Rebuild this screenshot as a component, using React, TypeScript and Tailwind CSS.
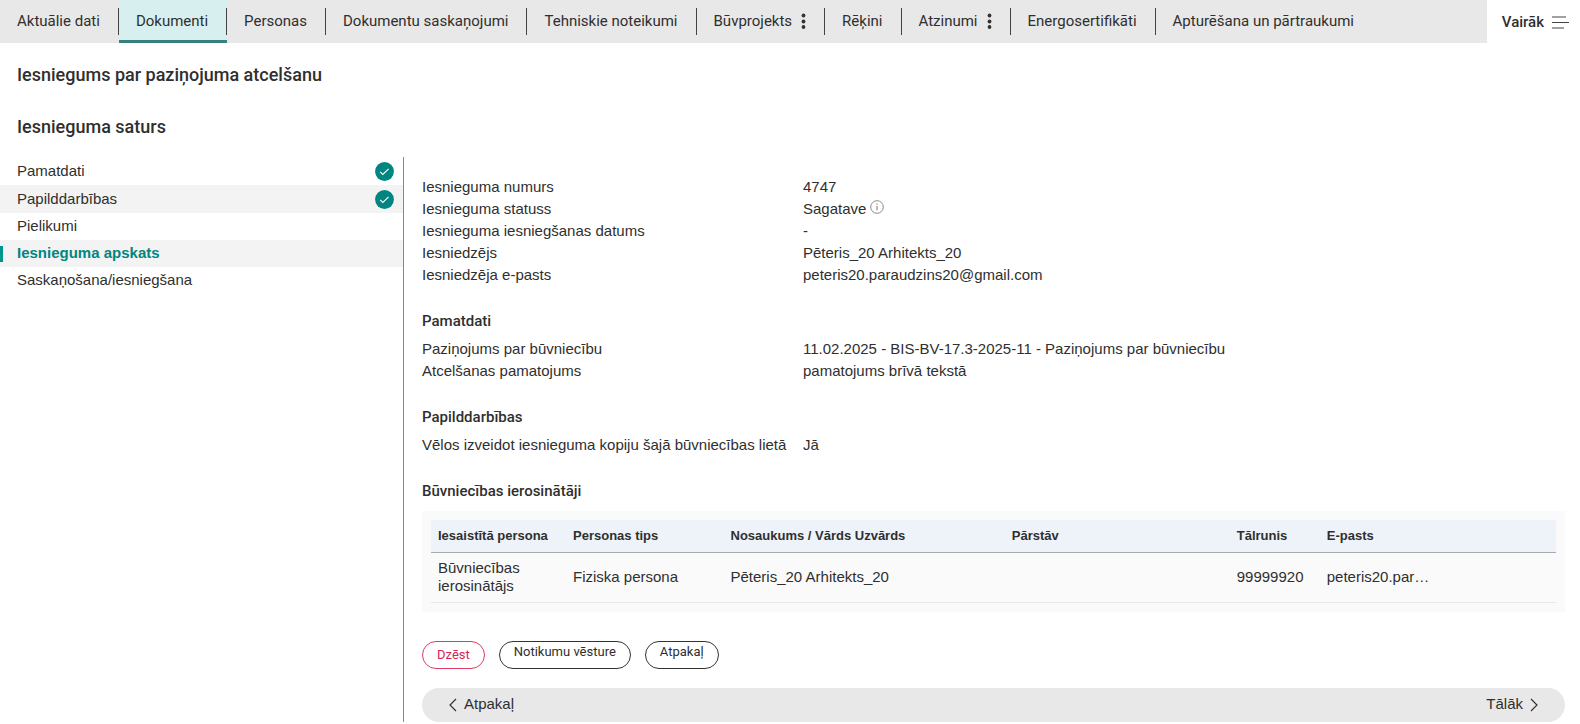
import { Fragment } from "react";

type Tab = { label: string; active?: boolean; menu?: boolean };

const tabs: Tab[] = [
  { label: "Aktuālie dati" },
  { label: "Dokumenti", active: true },
  { label: "Personas" },
  { label: "Dokumentu saskaņojumi" },
  { label: "Tehniskie noteikumi" },
  { label: "Būvprojekts", menu: true },
  { label: "Rēķini" },
  { label: "Atzinumi", menu: true },
  { label: "Energosertifikāti" },
  { label: "Apturēšana un pārtraukumi" },
];

const steps = [
  { label: "Pamatdati", done: true },
  { label: "Papilddarbības", done: true },
  { label: "Pielikumi" },
  { label: "Iesnieguma apskats", current: true },
  { label: "Saskaņošana/iesniegšana" },
];

function Dots() {
  return (
    <svg width="5" height="16" viewBox="0 0 5 16" fill="#333" aria-hidden="true">
      <circle cx="2.5" cy="2.5" r="1.9" />
      <circle cx="2.5" cy="8.5" r="1.9" />
      <circle cx="2.5" cy="14" r="1.9" />
    </svg>
  );
}

function InfoIcon() {
  return (
    <svg width="14" height="14" viewBox="0 0 14 14" fill="none" stroke="#8a8a8a" aria-hidden="true">
      <circle cx="7" cy="7" r="6.3" strokeWidth="1" />
      <path d="M7 6v4.2M7 3.6v1.2" strokeWidth="1.2" />
    </svg>
  );
}

function CheckIcon() {
  return (
    <svg width="19" height="19" viewBox="0 0 19 19" aria-hidden="true">
      <circle cx="9.5" cy="9.5" r="9.4" fill="#008580" />
      <path d="M5.2 9.9l2.6 2.6 5.8-5.6" fill="none" stroke="#fff" strokeWidth="1.1" />
    </svg>
  );
}

function Chevron({ d }: { d: string }) {
  return (
    <svg width="8" height="14" viewBox="0 0 8 14" fill="none" stroke="#333" strokeWidth="1.2" aria-hidden="true">
      <path d={d} />
    </svg>
  );
}

function Details({ rows }: { rows: [string, React.ReactNode][] }) {
  return (
    <dl className="grid grid-cols-3 leading-[22px]">
      {rows.map(([label, value]) => (
        <Fragment key={label}>
          <dt className="whitespace-nowrap">{label}</dt>
          <dd className="col-span-2">{value}</dd>
        </Fragment>
      ))}
    </dl>
  );
}

function SectionTitle({ children }: { children: React.ReactNode }) {
  return (
    <h3 className="mt-[25px] mb-[7px] font-[Roboto,sans-serif] text-[15px] leading-5 font-medium">{children}</h3>
  );
}

export default function App() {
  return (
    <div className="bg-white font-['Liberation_Sans',Arial,sans-serif] text-[15px] text-[#2f2f2f]">
      <header className="flex h-[43px] bg-[#e8e8e8] font-[Roboto,sans-serif]">
        <nav className="flex flex-1">
          {tabs.map((tab, i) => (
            <div
              key={tab.label}
              className={tab.active ? "flex border-b-[3px] border-[#36807e] bg-[#d7f0ef]" : "flex"}
            >
              <a href="#" className="flex h-[42px] items-center gap-[9px] pr-[18px] pl-[17px] whitespace-nowrap">
                {tab.label}
                {tab.menu && <Dots />}
              </a>
              {i < tabs.length - 1 && <span className="mt-2 h-[27px] w-px bg-[#444]" />}
            </div>
          ))}
        </nav>
        <button type="button" className="flex items-center gap-2 bg-white pt-0.5 pr-[11px] pl-[15px] font-medium">
          Vairāk
          <svg width="17" height="13" viewBox="0 0 17 13" fill="none" stroke="#444" strokeWidth="1.2" aria-hidden="true">
            <path d="M0 1h14M0 6.5h17M0 12h12" />
          </svg>
        </button>
      </header>

      <h1 className="mt-5 pl-[17px] font-[Roboto,sans-serif] text-[18px] leading-6 font-medium">
        Iesniegums par paziņojuma atcelšanu
      </h1>

      <h2 className="mt-7 pl-[17px] font-[Roboto,sans-serif] text-[18px] leading-6 font-medium">
        Iesnieguma saturs
      </h2>

      <div className="mt-[18px] flex">
        <nav className="w-[404px] shrink-0 border-r border-[#888]">
          <ul>
            {steps.map((s) => (
              <li key={s.label} className="even:bg-[#f3f3f3]">
                <a href="#" className={s.done ? "flex h-7 items-center pr-[9px]" : "flex h-[27px] items-center pr-[9px]"}>
                  <span className={s.current ? "h-4 w-[3px] bg-[#009490]" : "h-4 w-[3px]"} />
                  <span className={s.current ? "flex-1 pl-[14px] font-bold text-[#008580]" : "flex-1 pl-[14px]"}>
                    {s.label}
                  </span>
                  {s.done && <CheckIcon />}
                </a>
              </li>
            ))}
          </ul>
        </nav>

        <main className="min-w-0 flex-1 pt-[19px] pr-[15px] pl-[18px]">
          <Details
            rows={[
              ["Iesnieguma numurs", "4747"],
              [
                "Iesnieguma statuss",
                <span className="flex gap-1">
                  Sagatave
                  <button type="button" aria-label="Informācija" className="self-start pt-0.5">
                    <InfoIcon />
                  </button>
                </span>,
              ],
              ["Iesnieguma iesniegšanas datums", "-"],
              ["Iesniedzējs", "Pēteris_20 Arhitekts_20"],
              ["Iesniedzēja e-pasts", "peteris20.paraudzins20@gmail.com"],
            ]}
          />

          <SectionTitle>Pamatdati</SectionTitle>
          <Details
            rows={[
              ["Paziņojums par būvniecību", "11.02.2025 - BIS-BV-17.3-2025-11 - Paziņojums par būvniecību"],
              ["Atcelšanas pamatojums", "pamatojums brīvā tekstā"],
            ]}
          />

          <SectionTitle>Papilddarbības</SectionTitle>
          <Details rows={[["Vēlos izveidot iesnieguma kopiju šajā būvniecības lietā", "Jā"]]} />

          <SectionTitle>Būvniecības ierosinātāji</SectionTitle>
          <div className="mt-[10px] bg-[#fafafa] p-[9px]">
            <table className="w-full table-fixed border-collapse text-left">
              <thead>
                <tr className="h-8 border-b border-[#aaa] bg-[#eef3fa] text-[13px]">
                  <th className="w-[12%] px-[7px] font-bold">Iesaistītā persona</th>
                  <th className="w-[14%] px-[7px] font-bold">Personas tips</th>
                  <th className="w-[25%] px-[7px] font-bold">Nosaukums / Vārds Uzvārds</th>
                  <th className="w-[20%] px-[7px] font-bold">Pārstāv</th>
                  <th className="w-[8%] px-[7px] font-bold">Tālrunis</th>
                  <th className="w-[21%] px-[7px] font-bold">E-pasts</th>
                </tr>
              </thead>
              <tbody>
                <tr className="h-[50px] border-b border-[#e8e8e8]">
                  <td className="px-[7px] leading-[18px]">Būvniecības ierosinātājs</td>
                  <td className="px-[7px]">Fiziska persona</td>
                  <td className="px-[7px]">Pēteris_20 Arhitekts_20</td>
                  <td className="px-[7px]" />
                  <td className="px-[7px]">99999920</td>
                  <td className="px-[7px]">peteris20.par…</td>
                </tr>
              </tbody>
            </table>
          </div>

          <div className="mt-[29px] flex gap-[14px] font-[Roboto,sans-serif] text-[13px]">
            <button type="button" className="h-7 rounded-full border border-[#dd3b65] px-[14px] text-[#d62755]">
              Dzēst
            </button>
            <button type="button" className="h-7 rounded-full border border-[#333] px-[14px] pb-2">
              Notikumu vēsture
            </button>
            <button type="button" className="h-7 rounded-full border border-[#333] px-[14px] pb-2">
              Atpakaļ
            </button>
          </div>

          <div className="mt-[19px] flex h-[34px] items-center justify-between rounded-full bg-[#e8e8e8] px-[27px]">
            <button type="button" className="flex items-center gap-[7px]">
              <Chevron d="M7 1L1 7l6 6" />
              Atpakaļ
            </button>
            <button type="button" className="flex items-center gap-[7px]">
              Tālāk
              <Chevron d="M1 1l6 6-6 6" />
            </button>
          </div>
        </main>
      </div>
    </div>
  );
}
